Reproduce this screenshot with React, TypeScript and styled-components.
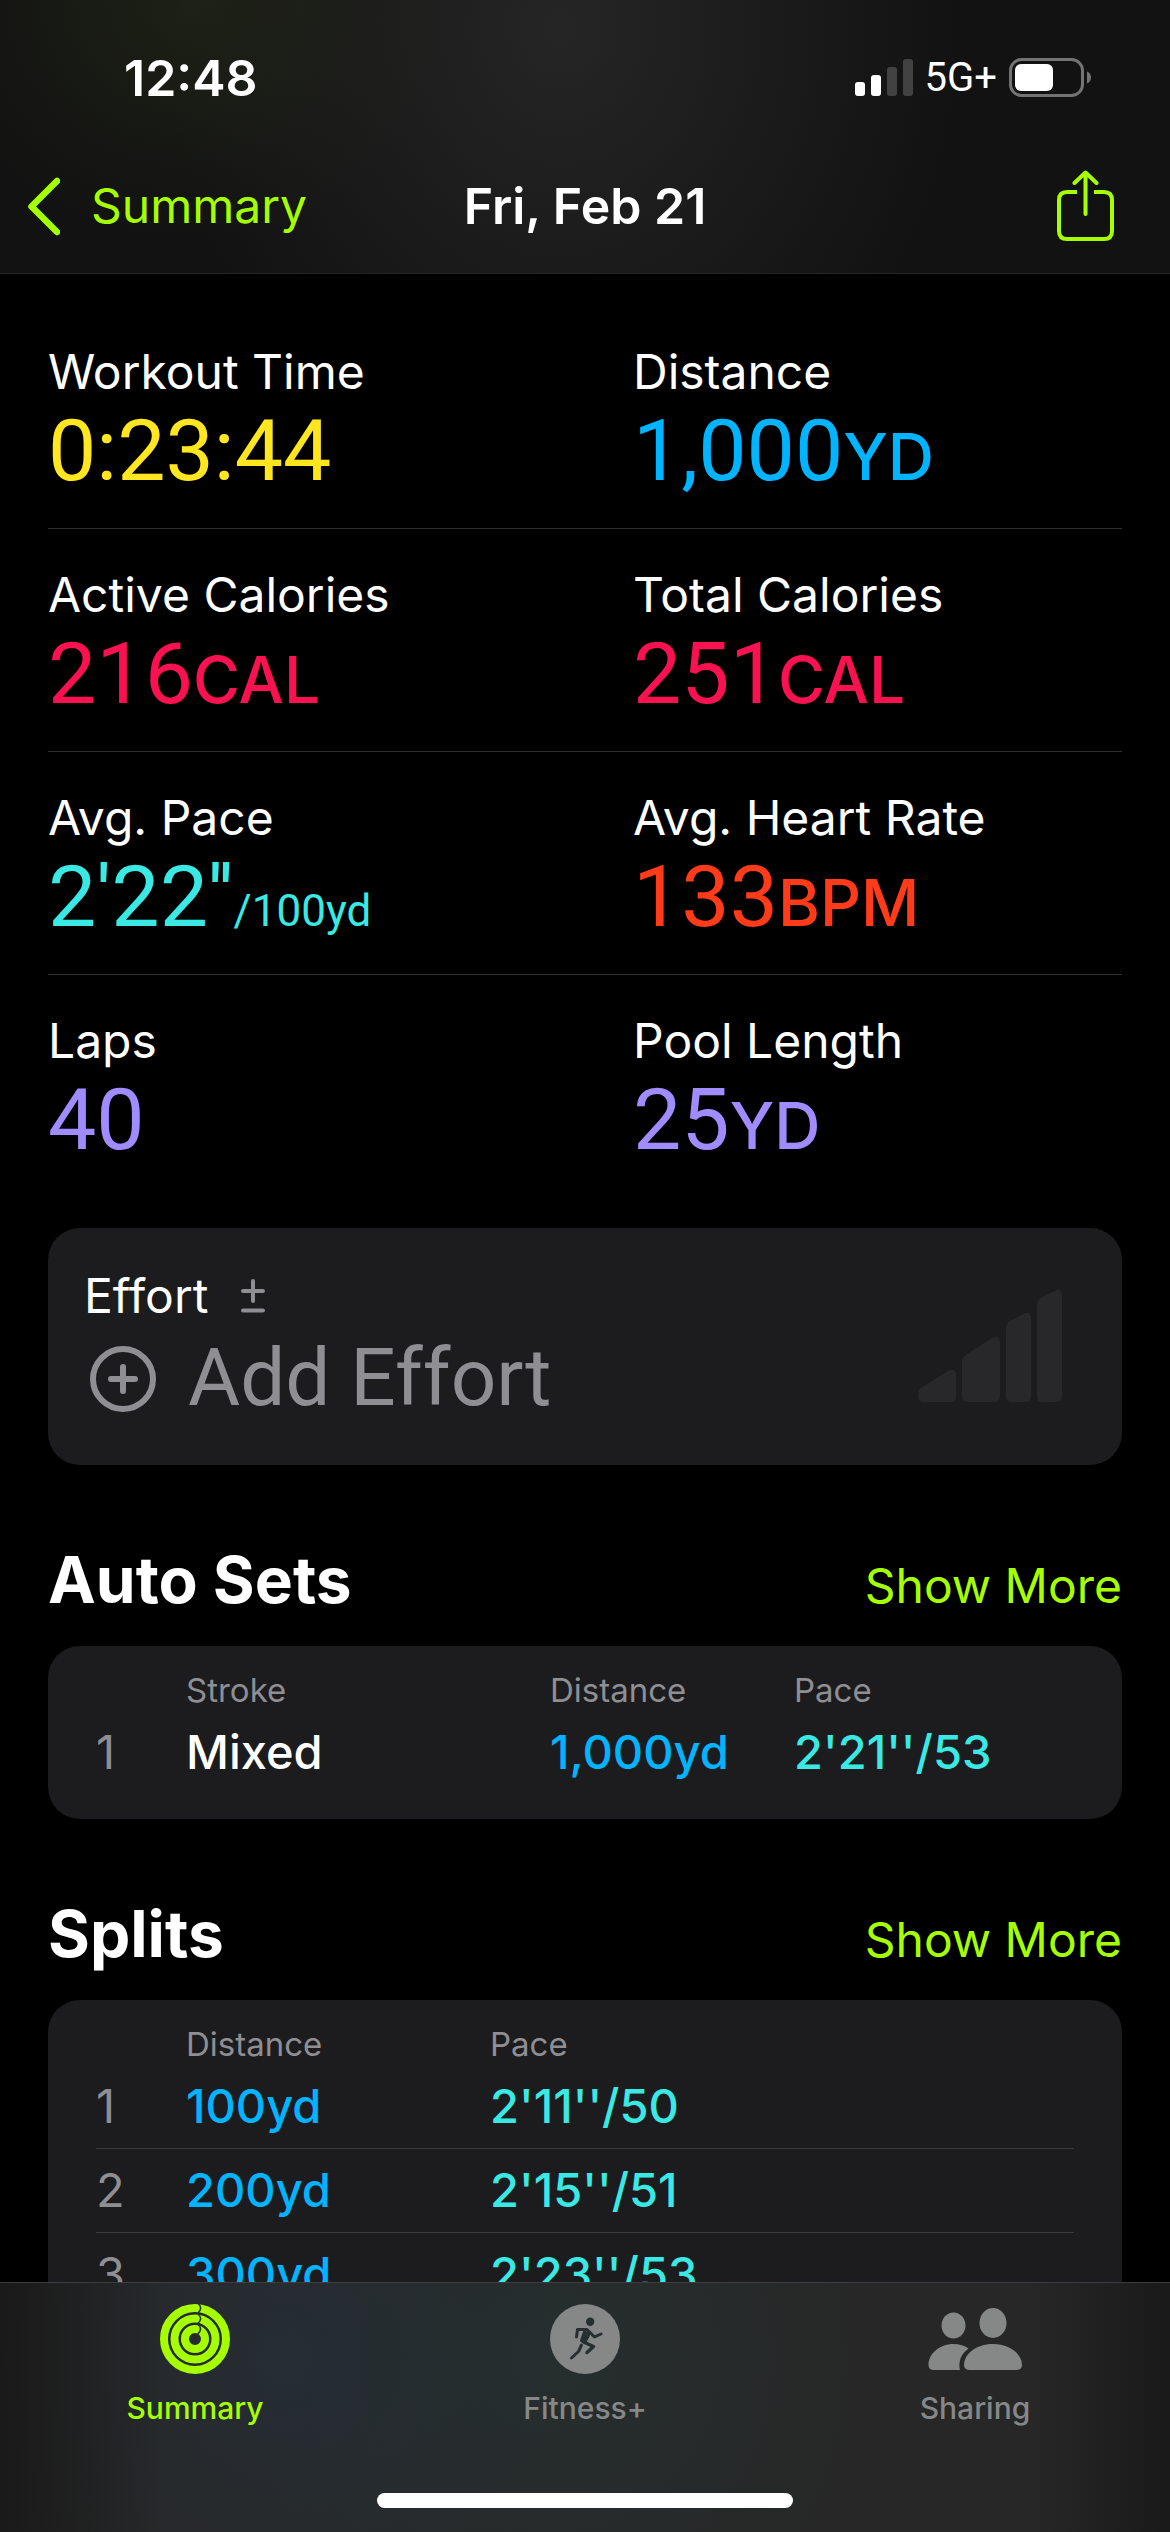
import React from "react";
import styled, { createGlobalStyle, css } from "styled-components";

const color = {
  lime: "#a6ff00",
  yellow: "#ffe620",
  blue: "#00b4ff",
  pink: "#fa114f",
  teal: "#3ae8e4",
  red: "#ff3b1a",
  violet: "#a18cff",
  card: "#1c1c1e",
  line: "#2f2f31",
  cardLine: "#39393c",
  muted: "#8e8e93",
};

const font = {
  text: `Inter, "Liberation Sans", sans-serif`,
  figure: `Roboto, Inter, "Liberation Sans", sans-serif`,
};

const GlobalStyle = createGlobalStyle`
  *, *::before, *::after { box-sizing: border-box; }
  body {
    margin: 0;
    background: #000;
    color: #fff;
    font-family: ${font.text};
  }
  h1, h2, p, dl, dd { margin: 0; }
`;

const plainButton = css`
  display: flex;
  align-items: center;
  padding: 0;
  border: 0;
  background: none;
  color: inherit;
  font: inherit;
  cursor: pointer;
`;

const Screen = styled.div`
  display: flex;
  flex-direction: column;
  height: 100vh;
  overflow: hidden;
`;

const Header = styled.header`
  flex: none;
  padding-top: 48px;
  border-bottom: 1px solid #262628;
  background:
    radial-gradient(ellipse 260px 240px at 16% 0%, rgba(36, 42, 24, 0.6), transparent),
    radial-gradient(ellipse 400px 460px at 48% 10%, rgba(42, 42, 42, 0.8), transparent),
    #121212;
`;

const StatusBar = styled.div`
  display: flex;
  align-items: center;
  justify-content: space-between;
  padding: 0 78px 0 124px;
  line-height: 60px;
`;

const Clock = styled.time`
  font-size: 50px;
  font-weight: 600;
`;

const StatusIcons = styled.div`
  display: flex;
  align-items: center;
  gap: 12px;
`;

const Network = styled.span`
  font-family: ${font.figure};
  font-size: 40px;
  font-weight: 400;
`;

const NavBar = styled.nav`
  display: grid;
  grid-template-columns: 1fr auto 1fr;
  align-items: center;
  padding: 62px 25px 31px;
  font-size: 48px;
  line-height: 60px;
`;

const BackButton = styled.button`
  ${plainButton}
  justify-self: start;
  gap: 31px;
  color: ${color.lime};
`;

const Title = styled.h1`
  font-size: 50px;
  font-weight: 600;
  line-height: 60px;
`;

const ShareButton = styled.button`
  ${plainButton}
  justify-self: end;
  padding-right: 30px;
  color: ${color.lime};
`;

const Content = styled.main`
  flex: 1;
  min-height: 0;
  padding: 32px 48px 48px;
  overflow-y: auto;
  scrollbar-width: none;
`;

const Metrics = styled.dl`
  display: flex;
  flex-direction: column;
`;

const MetricRow = styled.div`
  display: grid;
  grid-template-columns: 1fr 1fr;
  column-gap: 96px;
  padding: 36px 0 28px;
  & + & {
    border-top: 1px solid ${color.line};
  }
`;

const MetricLabel = styled.dt`
  font-size: 48px;
  line-height: 60px;
`;

const MetricValue = styled.dd<{ $color: string }>`
  color: ${(p) => p.$color};
  font-family: ${font.figure};
  font-size: 86px;
  line-height: 98px;
  white-space: nowrap;
`;

const Unit = styled.span`
  font-family: ${font.text};
  font-size: 64px;
  font-weight: 500;
  line-height: 1;
`;

const Per = styled.span`
  font-size: 44px;
  line-height: 1;
`;

const EffortCard = styled.section`
  display: flex;
  align-items: center;
  justify-content: space-between;
  margin-top: 31px;
  padding: 38px 58px 39px 36px;
  border-radius: 32px;
  background: ${color.card};
`;

const EffortTitle = styled.h2`
  display: flex;
  align-items: center;
  gap: 32px;
  font-size: 48px;
  font-weight: 400;
  line-height: 60px;
`;

const AddEffort = styled.button`
  ${plainButton}
  gap: 26px;
  margin-top: 4px;
  color: ${color.muted};
  font-family: ${font.figure};
  font-size: 80px;
  line-height: 96px;
`;

const Section = styled.section`
  padding-top: 75px;
`;

const SectionHead = styled.div`
  display: flex;
  align-items: baseline;
  justify-content: space-between;
  margin-bottom: 26px;
`;

const SectionTitle = styled.h2`
  font-size: 64px;
  font-weight: 700;
  line-height: 80px;
`;

const ShowMore = styled.a`
  color: ${color.lime};
  font-size: 48px;
  line-height: 60px;
  text-decoration: none;
`;

const Card = styled.div`
  padding: 24px 48px 25px;
  border-radius: 32px;
  background: ${color.card};
`;

const Table = styled.table`
  width: 100%;
  border-collapse: collapse;
  table-layout: fixed;
  text-align: left;
`;

const Col = styled.col<{ $width?: string }>`
  width: ${(p) => p.$width ?? "auto"};
`;

const Th = styled.th`
  padding: 0;
  color: ${color.muted};
  font-size: 33px;
  font-weight: 400;
  line-height: 40px;
`;

const Tr = styled.tr`
  & + & {
    border-top: 1px solid ${color.cardLine};
  }
`;

const Td = styled.td<{ $color?: string; $strong?: boolean }>`
  height: 84px;
  padding: 0;
  color: ${(p) => p.$color ?? "#fff"};
  font-size: 47px;
  font-weight: ${(p) => (p.$strong ? 500 : 400)};
  line-height: 60px;
  white-space: nowrap;
`;

const TabBar = styled.nav`
  flex: none;
  padding: 21px 0 24px;
  border-top: 1px solid #3c3d3f;
  background:
    linear-gradient(90deg, rgba(24, 24, 24, 0.9), transparent 14%, transparent 88%, rgba(24, 24, 24, 0.9)),
    radial-gradient(ellipse 280px 320px at 24% 30%, rgba(37, 46, 54, 0.8), transparent),
    radial-gradient(ellipse 320px 340px at 47% 30%, rgba(38, 48, 48, 0.8), transparent),
    #272727;
`;

const Tabs = styled.div`
  display: grid;
  grid-template-columns: repeat(3, 1fr);
`;

const Tab = styled.button<{ $active?: boolean }>`
  ${plainButton}
  flex-direction: column;
  gap: 14px;
  color: ${(p) => (p.$active ? color.lime : "#868888")};
  font-size: 30px;
  font-weight: 500;
  line-height: 40px;
`;

const HomeIndicator = styled.div`
  width: 416px;
  height: 15px;
  margin: 65px auto 0;
  border-radius: 8px;
  background: #fff;
`;

const SignalIcon = () => (
  <svg width="58" height="38" viewBox="0 0 58 38" fill="#fff" aria-hidden="true">
    <rect x="0" y="23" width="10" height="14" rx="3" />
    <rect x="16" y="16" width="10" height="21" rx="3" />
    <rect x="32" y="8" width="10" height="29" rx="3" fill="#424242" />
    <rect x="48" y="0" width="10" height="37" rx="3" fill="#424242" />
  </svg>
);

const BatteryIcon = () => (
  <svg width="83" height="40" viewBox="0 0 83 40" aria-hidden="true">
    <rect x="1.5" y="1.5" width="72" height="36" rx="11" fill="none" stroke="#737373" strokeWidth="3" />
    <rect x="6" y="6" width="38" height="27" rx="6" fill="#fff" />
    <path d="M78 13.5c2.600 1 4 3.300 4 6s-1.400 5-4 6z" fill="#737373" />
  </svg>
);

const ChevronIcon = () => (
  <svg width="35" height="60" viewBox="0 0 35 60" fill="none" stroke="currentColor" strokeWidth="6.500" strokeLinecap="round" strokeLinejoin="round" aria-hidden="true">
    <path d="M32 5 6.500 30.500 32 56" />
  </svg>
);

const ShareIcon = () => (
  <svg width="60" height="72" viewBox="0 0 60 72" fill="none" stroke="currentColor" strokeWidth="4" strokeLinecap="round" strokeLinejoin="round" aria-hidden="true">
    <path d="M22 22h-10q-8 0-8 8v31q0 8 8 8h37q8 0 8-8V30q0-8-8-8h-10" strokeLinecap="butt" />
    <path d="M30.500 44V3M19.500 13 30.500 2.500 41.500 13" />
  </svg>
);

const PlusMinusIcon = () => (
  <svg width="26" height="36" viewBox="0 0 26 36" stroke={color.muted} strokeWidth="4" strokeLinecap="round" aria-hidden="true">
    <path d="M3 13h20M13 3v20M3 32.500h20" />
  </svg>
);

const PlusCircleIcon = () => (
  <svg width="78" height="72" viewBox="0 0 78 72" fill="none" stroke="currentColor" strokeWidth="6" strokeLinecap="round" aria-hidden="true">
    <circle cx="39" cy="37" r="30" />
    <path d="M27 37h24M39 25v24" />
  </svg>
);

const EffortBarsIcon = () => (
  <svg width="146" height="112" viewBox="0 0 146 112" fill="#28282a" aria-hidden="true">
    <path d="M3 98 29 81.500q9-5 9 4V106q0 6-6 6H6q-6 0-6-6 0-5 3-8z" />
    <path d="M49 64 75 47.500q7-3 7 5V106q0 6-6 6H50q-6 0-6-6V72q0-5 5-8z" />
    <path d="M92 31 106 23.500q7-3 7 5V106q0 6-6 6H94q-6 0-6-6V39q0-5 4-8z" />
    <path d="M123 8 137 .8q7-3 7 5V106q0 6-6 6h-13q-6 0-6-6V16q0-5 4-8z" />
  </svg>
);

const RingsIcon = () => (
  <svg width="70" height="70" viewBox="0 0 70 70" fill="none" aria-hidden="true">
    <g stroke="currentColor" strokeWidth="8">
      <circle cx="35" cy="35" r="31" />
      <circle cx="35" cy="35" r="20.500" />
      <circle cx="35" cy="35" r="10" />
    </g>
    <g stroke="#262d31" strokeWidth="1.600">
      <path d="M38.500 0Q43 4 38 9" />
      <path d="M38.500 10.500Q43 14.500 38 19.500" />
      <path d="M38.500 21Q43 25 37.500 30.500" />
    </g>
  </svg>
);

const RunnerIcon = () => (
  <svg width="70" height="70" viewBox="0 0 70 70" fill="none" aria-hidden="true">
    <circle cx="35" cy="35" r="35" fill="currentColor" />
    <circle cx="40.200" cy="17.800" r="4.200" fill="#263031" />
    <g stroke="#263031" strokeWidth="3" strokeLinecap="round" strokeLinejoin="round">
      <path d="M26.500 33 27.500 25.500H37L44.500 33 51 30" />
      <path d="M33.500 38 43.500 42.500 37 48.500" strokeWidth="3.400" />
      <path d="M31.500 41 28.500 47.500 21.500 54" />
      <path d="M34.500 28 39 30 35 38 31.500 36.500z" fill="#263031" />
    </g>
  </svg>
);

const PeopleIcon = () => (
  <svg width="96" height="70" viewBox="0 0 96 70" fill="currentColor" aria-hidden="true">
    <ellipse cx="26.500" cy="21.500" rx="12" ry="13" />
    <ellipse cx="66" cy="19" rx="13.500" ry="15" />
    <path d="M7 66q-5.500 0-5.500-5C1.500 50 12 40 26.500 40c6 0 11 1.600 15 4.500C34 50 31 58 33 66z" />
    <path d="M43 66q-6 0-6-5C37 50 49 40 66 40s29 10 29 21q0 5-6 5z" />
  </svg>
);

type Metric = { label: string; value: string; unit?: string; per?: string; tint: string };

const metrics: Metric[][] = [
  [
    { label: "Workout Time", value: "0:23:44", tint: color.yellow },
    { label: "Distance", value: "1,000", unit: "YD", tint: color.blue },
  ],
  [
    { label: "Active Calories", value: "216", unit: "CAL", tint: color.pink },
    { label: "Total Calories", value: "251", unit: "CAL", tint: color.pink },
  ],
  [
    { label: "Avg. Pace", value: "2'22''", per: "/100yd", tint: color.teal },
    { label: "Avg. Heart Rate", value: "133", unit: "BPM", tint: color.red },
  ],
  [
    { label: "Laps", value: "40", tint: color.violet },
    { label: "Pool Length", value: "25", unit: "YD", tint: color.violet },
  ],
];

const splits = [
  { distance: "100yd", pace: "2'11''/50" },
  { distance: "200yd", pace: "2'15''/51" },
  { distance: "300yd", pace: "2'23''/53" },
];

export default function App() {
  return (
    <Screen>
      <GlobalStyle />
      <Header>
        <StatusBar>
          <Clock>12:48</Clock>
          <StatusIcons>
            <SignalIcon />
            <Network>5G+</Network>
            <BatteryIcon />
          </StatusIcons>
        </StatusBar>
        <NavBar>
          <BackButton type="button">
            <ChevronIcon />
            Summary
          </BackButton>
          <Title>Fri, Feb 21</Title>
          <ShareButton type="button" aria-label="Share">
            <ShareIcon />
          </ShareButton>
        </NavBar>
      </Header>

      <Content>
        <Metrics>
          {metrics.map((row) => (
            <MetricRow key={row[0].label}>
              {row.map((m) => (
                <div key={m.label}>
                  <MetricLabel>{m.label}</MetricLabel>
                  <MetricValue $color={m.tint}>
                    {m.value}
                    {m.unit && <Unit>{m.unit}</Unit>}
                    {m.per && <Per>{m.per}</Per>}
                  </MetricValue>
                </div>
              ))}
            </MetricRow>
          ))}
        </Metrics>

        <EffortCard>
          <div>
            <EffortTitle>
              Effort
              <PlusMinusIcon />
            </EffortTitle>
            <AddEffort type="button">
              <PlusCircleIcon />
              Add Effort
            </AddEffort>
          </div>
          <EffortBarsIcon />
        </EffortCard>

        <Section>
          <SectionHead>
            <SectionTitle>Auto Sets</SectionTitle>
            <ShowMore href="#auto-sets">Show More</ShowMore>
          </SectionHead>
          <Card>
            <Table>
              <colgroup>
                <Col $width="90px" />
                <Col />
                <Col $width="244px" />
                <Col $width="280px" />
              </colgroup>
              <thead>
                <tr>
                  <Th aria-label="Set" />
                  <Th scope="col">Stroke</Th>
                  <Th scope="col">Distance</Th>
                  <Th scope="col">Pace</Th>
                </tr>
              </thead>
              <tbody>
                <Tr>
                  <Td $color={color.muted}>1</Td>
                  <Td $strong>Mixed</Td>
                  <Td $strong $color={color.blue}>1,000yd</Td>
                  <Td $strong $color={color.teal}>2'21''/53</Td>
                </Tr>
              </tbody>
            </Table>
          </Card>
        </Section>

        <Section>
          <SectionHead>
            <SectionTitle>Splits</SectionTitle>
            <ShowMore href="#splits">Show More</ShowMore>
          </SectionHead>
          <Card>
            <Table>
              <colgroup>
                <Col $width="90px" />
                <Col $width="304px" />
                <Col />
              </colgroup>
              <thead>
                <tr>
                  <Th aria-label="Split" />
                  <Th scope="col">Distance</Th>
                  <Th scope="col">Pace</Th>
                </tr>
              </thead>
              <tbody>
                {splits.map((s, i) => (
                  <Tr key={s.distance}>
                    <Td $color={color.muted}>{i + 1}</Td>
                    <Td $strong $color={color.blue}>{s.distance}</Td>
                    <Td $strong $color={color.teal}>{s.pace}</Td>
                  </Tr>
                ))}
              </tbody>
            </Table>
          </Card>
        </Section>
      </Content>

      <TabBar>
        <Tabs>
          <Tab type="button" $active>
            <RingsIcon />
            Summary
          </Tab>
          <Tab type="button">
            <RunnerIcon />
            Fitness+
          </Tab>
          <Tab type="button">
            <PeopleIcon />
            Sharing
          </Tab>
        </Tabs>
        <HomeIndicator />
      </TabBar>
    </Screen>
  );
}
